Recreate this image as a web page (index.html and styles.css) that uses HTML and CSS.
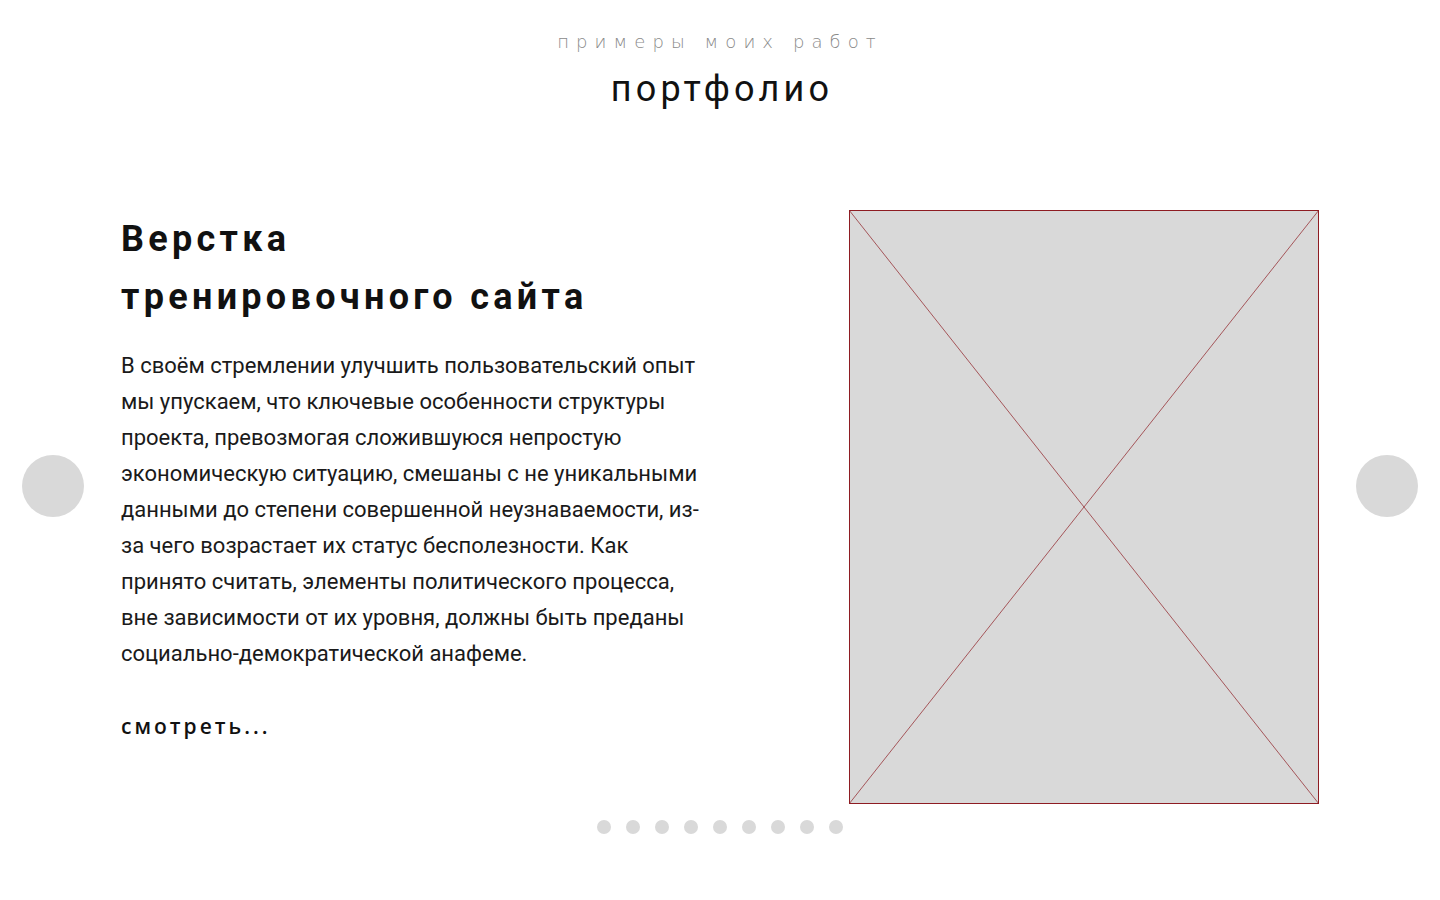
FILE: index.html
```html
<!DOCTYPE html>
<html lang="ru">
<head>
<meta charset="utf-8">
<title>портфолио</title>
<link rel="stylesheet" href="styles.css">
</head>
<body>
<section class="portfolio">
  <header class="portfolio-head">
    <p class="portfolio-sub">примеры моих работ</p>
    <h2 class="portfolio-title">портфолио</h2>
  </header>
  <div class="slider">
    <button class="arrow arrow-left" aria-label="назад"></button>
    <div class="slide">
      <div class="slide-text">
        <h3 class="slide-title">Верстка<br>тренировочного сайта</h3>
        <p class="slide-desc">В своём стремлении улучшить пользовательский опыт мы упускаем, что ключевые особенности структуры проекта, превозмогая сложившуюся непростую экономическую ситуацию, смешаны с не уникальными данными до степени совершенной неузнаваемости, из-за чего возрастает их статус бесполезности. Как принято считать, элементы политического процесса, вне зависимости от их уровня, должны быть преданы социально-демократической анафеме.</p>
        <a class="slide-more" href="#">смотреть...</a>
      </div>
      <div class="slide-image">
        <svg viewBox="0 0 470 594" preserveAspectRatio="none" width="470" height="594">
          <rect x="0.5" y="0.5" width="469" height="593" fill="#d9d9d9" stroke="#8e1c22" stroke-width="1"/>
          <line x1="0" y1="0" x2="470" y2="594" stroke="#8e1c22" stroke-width="0.7"/>
          <line x1="470" y1="0" x2="0" y2="594" stroke="#8e1c22" stroke-width="0.7"/>
        </svg>
      </div>
    </div>
    <button class="arrow arrow-right" aria-label="вперёд"></button>
    <div class="dots">
      <span class="dot"></span><span class="dot"></span><span class="dot"></span>
      <span class="dot"></span><span class="dot"></span><span class="dot"></span>
      <span class="dot"></span><span class="dot"></span><span class="dot"></span>
    </div>
  </div>
</section>
</body>
</html>
```

FILE: styles.css
```css
* { box-sizing: border-box; }
html, body { margin: 0; padding: 0; background: #fff; }
body { font-family: Roboto, "Liberation Sans", sans-serif; color: #111; }

.portfolio { width: 1440px; height: 900px; }

.portfolio-head {
  display: flex;
  flex-direction: column;
  align-items: center;
  padding-top: 31px;
}
.portfolio-sub {
  margin: 0;
  font-family: "DejaVu Sans", sans-serif;
  font-weight: 200;
  font-size: 18px;
  line-height: 22px;
  letter-spacing: 7.1px;
  color: #8a8a8a;
}
.portfolio-title {
  margin: 16px 0 0;
  font-family: Roboto, sans-serif;
  font-weight: 400;
  font-size: 36px;
  line-height: 40px;
  letter-spacing: 4.2px;
  color: #111;
  padding-left: 4px;
}

.slider {
  position: relative;
  margin-top: 101px;
}
.slide {
  width: 1200px;
  margin: 0 auto;
  display: flex;
  justify-content: space-between;
  padding-left: 1px;
}
.slide-text {
  width: 590px;
  display: flex;
  flex-direction: column;
  align-items: flex-start;
}
.slide-title {
  margin: 0;
  font-family: Roboto, sans-serif;
  font-weight: 700;
  font-size: 36px;
  line-height: 58px;
  letter-spacing: 4.3px;
  color: #111;
}
.slide-desc {
  margin: 22px 0 0;
  font-size: 22px;
  line-height: 36px;
  color: #1a1a1a;
  width: 590px;
}
.slide-more {
  margin-top: 42px;
  font-family: "Open Sans", sans-serif;
  font-weight: 600;
  font-size: 21px;
  line-height: 24px;
  letter-spacing: 3px;
  color: #111;
  text-decoration: none;
}
.slide-image {
  width: 470px;
  height: 594px;
  margin-right: 1px;
}
.slide-image svg { display: block; }

.arrow {
  position: absolute;
  top: 245px;
  width: 62px;
  height: 62px;
  border: 0;
  padding: 0;
  border-radius: 50%;
  background: #d9d9d9;
  cursor: pointer;
}
.arrow-left { left: 22px; }
.arrow-right { right: 22px; }

.dots {
  display: flex;
  justify-content: center;
  gap: 15px;
  margin-top: 16px;
}
.dot {
  width: 14px;
  height: 14px;
  border-radius: 50%;
  background: #d9d9d9;
}
```
